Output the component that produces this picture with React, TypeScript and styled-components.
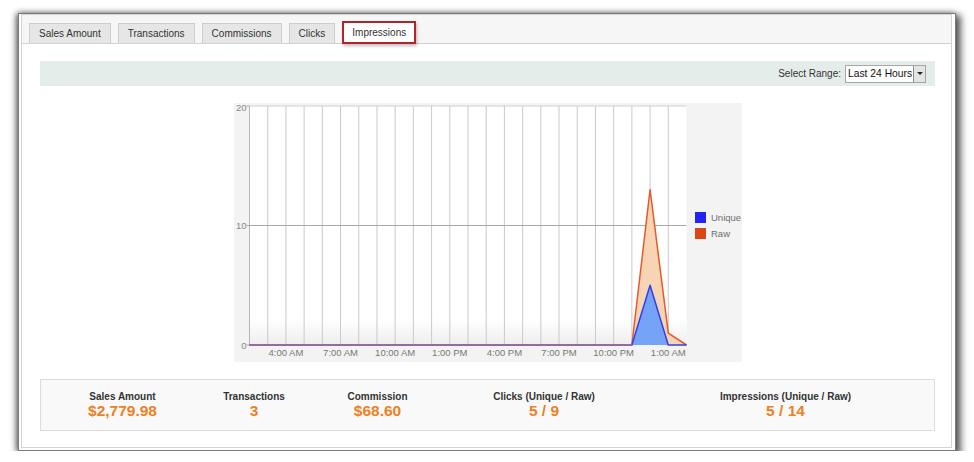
import React from "react";
import styled, { createGlobalStyle } from "styled-components";

const Global = createGlobalStyle`
  html, body { margin: 0; padding: 0; background: #ffffff; }
  body { font-family: "Liberation Sans", Arial, sans-serif; }
`;

const Page = styled.div`
  padding: 13px 0 0 18px;
`;

const Window = styled.div`
  width: 938px;
  box-sizing: border-box;
  border: 1px solid #7a7a7a;
  background: #ffffff;
  padding: 0 3px 2px 2px;
  box-shadow: 3px 4px 7px 2px rgba(0, 0, 0, 0.62), -2px 0 6px rgba(0, 0, 0, 0.45);
`;

const Panel = styled.div`
  border: 1px solid #d4d4d4;
  background: #ffffff;
`;

const TabBar = styled.div`
  display: flex;
  align-items: flex-end;
  gap: 7px;
  height: 28px;
  padding-left: 7px;
  background: #f6f6f6;
  border-bottom: 1px solid #d2d2d2;
`;

const Tab = styled.div<{ $active?: boolean }>`
  box-sizing: border-box;
  height: ${(p) => (p.$active ? "23px" : "20px")};
  padding: 0 ${(p) => (p.$active ? "8px" : "9px")} 1px;
  display: flex;
  align-items: center;
  font-size: 10px;
  color: #333;
  background: ${(p) => (p.$active ? "#ffffff" : "#e6e6e6")};
  border: ${(p) => (p.$active ? "2px solid #b3242a" : "1px solid #cdcdcd")};
  border-bottom: ${(p) => (p.$active ? "2px solid #b3242a" : "none")};
  margin-bottom: ${(p) => (p.$active ? "-1px" : "0")};
  box-shadow: ${(p) => (p.$active ? "1px 2px 3px rgba(0,0,0,0.25)" : "none")};
  position: relative;
`;

const Content = styled.div`
  padding: 17px 16px 16px 18px;
`;

const RangeBar = styled.div`
  height: 25px;
  background: #e5edeb;
  display: flex;
  align-items: center;
  justify-content: flex-end;
  padding-right: 9px;
  gap: 4px;
`;

const RangeLabel = styled.span`
  font-size: 10px;
  color: #333;
`;

const Select = styled.div`
  box-sizing: border-box;
  width: 81px;
  height: 18px;
  border: 1px solid #a6a6a6;
  background: #fff;
  display: flex;
  align-items: center;
  justify-content: space-between;
  padding-left: 2px;
  font-size: 10.3px;
  color: #111;
`;

const SelectButton = styled.span`
  box-sizing: border-box;
  width: 12px;
  height: 16px;
  background: #e4e4e4;
  border-left: 1px solid #8c8c8c;
  display: flex;
  align-items: center;
  justify-content: center;
  &::after {
    content: "";
    border-left: 3px solid transparent;
    border-right: 3px solid transparent;
    border-top: 3px solid #222;
  }
`;

const ChartWrap = styled.div`
  width: 508px;
  height: 259px;
  margin: 17px auto 0;
  background: #f3f3f3;
`;

const Summary = styled.div`
  margin-top: 17px;
  box-sizing: border-box;
  height: 52px;
  border: 1px solid #dcdcdc;
  background: #f9f9f9;
  display: grid;
  grid-template-columns: 163px 100px 147px 186px 1fr;
  padding-top: 10px;
`;

const Stat = styled.div`
  display: flex;
  flex-direction: column;
  align-items: center;
`;

const StatLabel = styled.div`
  font-size: 10px;
  font-weight: bold;
  color: #333;
  line-height: 13px;
`;

const StatValue = styled.div`
  font-size: 15.5px;
  font-weight: bold;
  color: #ee7f22;
  line-height: 16px;
`;

const W = 508;
const H = 259;
const PX0 = 15.5;
const PX1 = 452.5;
const PY0 = 3;
const PY1 = 242;
const STEP = (PX1 - PX0) / 24;
const UNIT = (PY1 - PY0) / 20;

const raw = Array.from({ length: 25 }, (_, i) => (i === 22 ? 13 : i === 23 ? 1 : 0));
const unique = Array.from({ length: 25 }, (_, i) => (i === 22 ? 5 : 0));

const xAt = (i: number) => PX0 + i * STEP;
const yAt = (v: number) => PY1 - v * UNIT;

const linePath = (d: number[]) => d.map((v, i) => `${i ? "L" : "M"}${xAt(i).toFixed(2)},${yAt(v).toFixed(2)}`).join(" ");
const areaPath = (d: number[]) => `${linePath(d)} L${xAt(24)},${PY1} L${xAt(0)},${PY1} Z`;

const xLabels: [number, string][] = [
  [2, "4:00 AM"],
  [5, "7:00 AM"],
  [8, "10:00 AM"],
  [11, "1:00 PM"],
  [14, "4:00 PM"],
  [17, "7:00 PM"],
  [20, "10:00 PM"],
  [23, "1:00 AM"],
];

const Chart: React.FC = () => (
  <svg width={W} height={H} viewBox={`0 0 ${W} ${H}`} fontFamily="'Liberation Sans', Arial, sans-serif">
    <defs>
      <linearGradient id="fade" x1="0" y1="0" x2="0" y2="1">
        <stop offset="0" stopColor="#ffffff" />
        <stop offset="1" stopColor="#eeeeee" />
      </linearGradient>
      <clipPath id="box">
        <rect x="0" y="0" width={W} height={H} />
      </clipPath>
    </defs>
    <rect x={PX0} y={PY0} width={PX1 - PX0} height={PY1 - PY0} fill="#ffffff" />
    <rect x={PX0} y={PY1 - 26} width={PX1 - PX0} height={26} fill="url(#fade)" />
    {Array.from({ length: 24 }, (_, i) => (
      <line key={i} x1={xAt(i)} x2={xAt(i)} y1={PY0} y2={PY1} stroke={i === 0 ? "#b4b4b4" : "#cacaca"} strokeWidth={1} />
    ))}
    <line x1={PX0} x2={PX1} y1={PY0} y2={PY0} stroke="#d0d0d0" strokeWidth={1} />
    <line x1={PX0} x2={PX1} y1={yAt(10)} y2={yAt(10)} stroke="#a8a8a8" strokeWidth={1} />
    {[20, 10, 0].map((v) => (
      <g key={v}>
        <line x1={PX0 - 3} x2={PX0} y1={yAt(v)} y2={yAt(v)} stroke="#aaa" />
        <text x={PX0 - 3} y={yAt(v) + (v === 20 ? 4.5 : 3.5)} fontSize="9.5" fill="#888" textAnchor="end">
          {v}
        </text>
      </g>
    ))}
    <path d={areaPath(raw)} fill="#f7d4b4" />
    <path d={areaPath(unique)} fill="#74a3f7" />
    <path d={linePath(raw)} fill="none" stroke="#e65a2a" strokeWidth={1.5} strokeLinejoin="round" />
    <path d={linePath(unique)} fill="none" stroke="#3140ee" strokeWidth={1.5} strokeLinejoin="round" />
    <line x1={PX0} x2={xAt(21)} y1={PY1} y2={PY1} stroke="#a8738f" strokeWidth={1.6} />
    {xLabels.map(([i, t]) => (
      <text key={t} x={xAt(i)} y={PY1 + 11} fontSize="9.5" fill="#777" textAnchor="middle">
        {t}
      </text>
    ))}
    <g clipPath="url(#box)">
      <rect x={461} y={109} width={11} height={11} fill="#2323f6" />
      <text x={477} y={117.5} fontSize="9.5" fill="#6f6f6f">
        Unique
      </text>
      <rect x={461} y={125} width={11} height={11} fill="#da4716" />
      <text x={477} y={133.5} fontSize="9.5" fill="#6f6f6f">
        Raw
      </text>
    </g>
  </svg>
);

const tabs = ["Sales Amount", "Transactions", "Commissions", "Clicks", "Impressions"];

const stats: [string, string][] = [
  ["Sales Amount", "$2,779.98"],
  ["Transactions", "3"],
  ["Commission", "$68.60"],
  ["Clicks (Unique / Raw)", "5 / 9"],
  ["Impressions (Unique / Raw)", "5 / 14"],
];

export default function App() {
  return (
    <>
      <Global />
      <Page>
        <Window>
          <Panel>
            <TabBar>
              {tabs.map((t) => (
                <Tab key={t} $active={t === "Impressions"}>
                  {t}
                </Tab>
              ))}
            </TabBar>
            <Content>
              <RangeBar>
                <RangeLabel>Select Range:</RangeLabel>
                <Select>
                  <span>Last 24 Hours</span>
                  <SelectButton />
                </Select>
              </RangeBar>
              <ChartWrap>
                <Chart />
              </ChartWrap>
              <Summary>
                {stats.map(([l, v]) => (
                  <Stat key={l}>
                    <StatLabel>{l}</StatLabel>
                    <StatValue>{v}</StatValue>
                  </Stat>
                ))}
              </Summary>
            </Content>
          </Panel>
        </Window>
      </Page>
    </>
  );
}
